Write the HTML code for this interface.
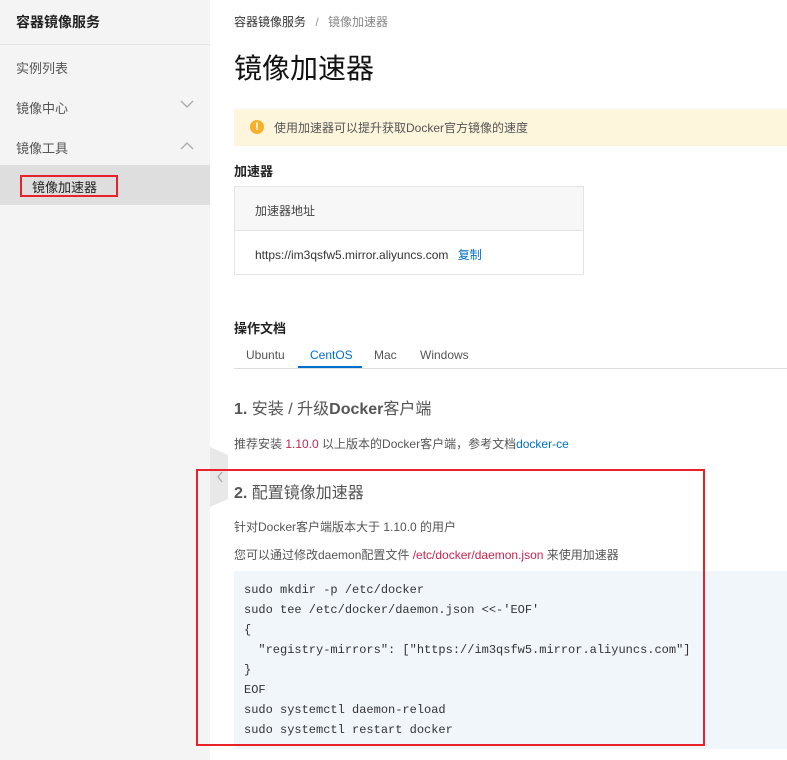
<!DOCTYPE html>
<html><head><meta charset="utf-8"><style>
*{margin:0;padding:0;box-sizing:border-box}
body{width:787px;height:760px;overflow:hidden;background:#fff;font-family:"Liberation Sans","Noto Sans CJK SC",sans-serif;color:#333;position:relative}
.side{position:absolute;left:0;top:0;width:210px;height:760px;background:#f4f4f4}
.abs{position:absolute;white-space:nowrap}
.mono{font-family:"Liberation Mono","DejaVu Sans Mono",monospace}
</style></head><body>
<div class="side">
 <div class="abs" style="left:16px;top:12px;font-size:14px;font-weight:bold;color:#222">容器镜像服务</div>
 <div class="abs" style="left:0;top:44px;width:210px;height:1px;background:#e4e4e4"></div>
 <div class="abs" style="left:16px;top:58px;font-size:13px;color:#555">实例列表</div>
 <div class="abs" style="left:16px;top:98px;font-size:13px;color:#555">镜像中心</div>
 <svg class="abs" style="left:180px;top:100px" width="14" height="9"><path d="M1 1l6 6 6-6" stroke="#aaa" fill="none" stroke-width="1.3"/></svg>
 <div class="abs" style="left:16px;top:138px;font-size:13px;color:#555">镜像工具</div>
 <svg class="abs" style="left:180px;top:141px" width="14" height="9"><path d="M1 8l6-6 6 6" stroke="#aaa" fill="none" stroke-width="1.3"/></svg>
 <div class="abs" style="left:0;top:165px;width:210px;height:40px;background:#dedede"></div>
 <div class="abs" style="left:20px;top:175px;width:98px;height:22px;border:2px solid #e8212b"></div>
 <div class="abs" style="left:32px;top:177px;font-size:13px;color:#222">镜像加速器</div>
</div>
<svg class="abs" style="left:210px;top:447px" width="18" height="60"><path d="M0 0L18 8V52L0 60Z" fill="#e8e8e8"/><path d="M12 25l-4 5 4 5" stroke="#aaa" fill="none" stroke-width="1.3"/></svg>
<div class="abs" style="left:234px;top:13px;font-size:12px;color:#333">容器镜像服务 <span style="color:#999;margin:0 6px">/</span> <span style="color:#888">镜像加速器</span></div>
<div class="abs" style="left:234px;top:47px;font-size:28px;color:#111">镜像加速器</div>
<div class="abs" style="left:234px;top:109px;width:553px;height:37px;background:#fdf5dc"></div>
<div class="abs" style="left:250px;top:120px;width:14px;height:14px;border-radius:50%;background:#f6b12c;color:#fff;font-size:11px;font-weight:bold;text-align:center;line-height:14px">!</div>
<div class="abs" style="left:274px;top:119px;font-size:12px;color:#555">使用加速器可以提升获取Docker官方镜像的速度</div>
<div class="abs" style="left:234px;top:161px;font-size:13px;font-weight:bold;color:#222">加速器</div>
<div class="abs" style="left:234px;top:186px;width:350px;height:89px;border:1px solid #e4e4e4"></div>
<div class="abs" style="left:235px;top:187px;width:348px;height:44px;background:#f7f7f7;border-bottom:1px solid #e4e4e4"></div>
<div class="abs" style="left:255px;top:202px;font-size:12px;color:#444">加速器地址</div>
<div class="abs" style="left:255px;top:246px;font-size:12px;color:#333">https://im3qsfw5.mirror.aliyuncs.com <span style="color:#0070cc;margin-left:6px">复制</span></div>
<div class="abs" style="left:234px;top:318px;font-size:13px;font-weight:bold;color:#222">操作文档</div>
<div class="abs" style="left:234px;top:368px;width:553px;height:1px;background:#ddd"></div>
<div class="abs" style="left:246px;top:348px;font-size:12px;color:#555">Ubuntu</div>
<div class="abs" style="left:310px;top:348px;font-size:12px;color:#0070cc">CentOS</div>
<div class="abs" style="left:298px;top:366px;width:64px;height:2px;background:#0070cc"></div>
<div class="abs" style="left:374px;top:348px;font-size:12px;color:#555">Mac</div>
<div class="abs" style="left:420px;top:348px;font-size:12px;color:#555">Windows</div>
<div class="abs" style="left:234px;top:395px;font-size:16px;color:#555"><b>1.</b> 安装 / 升级<b>Docker</b>客户端</div>
<div class="abs" style="left:234px;top:435px;font-size:12px;color:#555">推荐安装 <span style="color:#c7254e">1.10.0</span> 以上版本的Docker客户端，参考文档<span style="color:#0070cc">docker-ce</span></div>
<div class="abs" style="left:234px;top:479px;font-size:16px;color:#555"><b>2.</b> 配置镜像加速器</div>
<div class="abs" style="left:234px;top:518px;font-size:12px;color:#555">针对Docker客户端版本大于 1.10.0 的用户</div>
<div class="abs" style="left:234px;top:546px;font-size:12px;color:#555">您可以通过修改daemon配置文件 <span style="color:#c7254e">/etc/docker/daemon.json</span> 来使用加速器</div>
<div class="abs" style="left:234px;top:571px;width:553px;height:178px;background:#f1f6fb"></div>
<pre class="abs mono" style="left:244px;top:580px;font-size:12px;line-height:20px;color:#333;white-space:pre">sudo mkdir -p /etc/docker
sudo tee /etc/docker/daemon.json &lt;&lt;-'EOF'
{
  "registry-mirrors": ["https://im3qsfw5.mirror.aliyuncs.com"]
}
EOF
sudo systemctl daemon-reload
sudo systemctl restart docker</pre>
<div class="abs" style="left:196px;top:469px;width:509px;height:277px;border:2px solid #e8212b"></div>
</body></html>
